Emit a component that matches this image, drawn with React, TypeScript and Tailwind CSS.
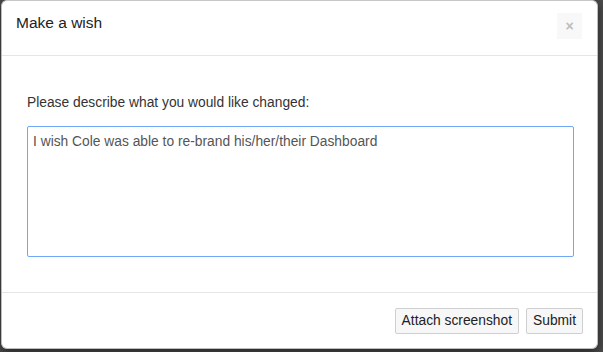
import React from "react";

export default function App() {
  return (
    <div className="w-[603px] h-[352px] bg-[#4a4a4a] overflow-hidden pl-[1px]" style={{ fontFamily: '"Liberation Sans", Arial, sans-serif' }}>
      <div className="w-[597px] h-[349px] bg-white border border-[#bdbdbd] border-t-[#c8c8c8] rounded-[6px] shadow-[0_3px_9px_rgba(0,0,0,0.5)] flex flex-col box-border">
        <div className="h-[55px] border-b border-[#e5e5e5] flex items-start justify-between pl-[14px] pr-[15px] pt-[12px] shrink-0 box-border">
          <h4 className="text-[15.5px] text-[#222] leading-[20px]">Make a wish</h4>
          <button className="w-[25px] h-[26px] bg-[#f8f8f8] flex items-center justify-center text-[#bdbdbd] text-[14px] font-bold leading-none">×</button>
        </div>
        <div className="h-[236px] shrink-0 pl-[25px] pt-[38px] box-border">
          <label className="block text-[13.8px] text-[#333] leading-[18px]">Please describe what you would like changed:</label>
          <div className="mt-[14px] w-[547px] h-[131px] border border-[#6fa8f6] rounded-[2px] px-[5px] pt-[6px] text-[13.8px] text-[#555] leading-[18px] box-border">
            I wish Cole was able to re-brand his/her/their Dashboard
          </div>
        </div>
        <div className="flex-1 border-t border-[#e5e5e5] flex items-start justify-end gap-[7px] pr-[14px] pt-[15px]">
          <button className="h-[26px] px-[6px] bg-[#f7f7f7] border border-[#cfcfcf] rounded-[2px] text-[13.8px] text-[#222] leading-none">Attach screenshot</button>
          <button className="h-[26px] px-[6px] bg-[#f7f7f7] border border-[#cfcfcf] rounded-[2px] text-[13.8px] text-[#222] leading-none">Submit</button>
        </div>
      </div>
    </div>
  );
}
